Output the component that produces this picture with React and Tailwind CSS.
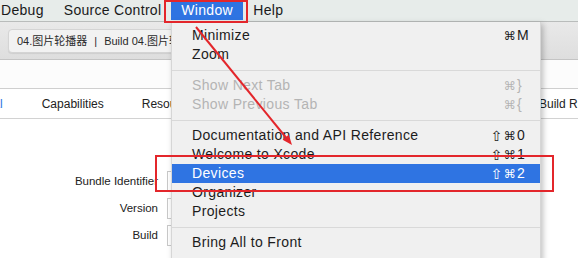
import React from "react";

const FONT = "font-['Liberation_Sans','Noto_Sans_CJK_SC',sans-serif]";

const items = [
  { t: "Minimize", m: "⌘", k: "M" },
  { t: "Zoom" },
  "sep",
  { t: "Show Next Tab", m: "⌘", k: "}", dis: true },
  { t: "Show Previous Tab", m: "⌘", k: "{", dis: true },
  "sep",
  { t: "Documentation and API Reference", s: true, k: "0" },
  { t: "Welcome to Xcode", s: true, k: "1" },
  { t: "Devices", s: true, k: "2", sel: true },
  { t: "Organizer" },
  { t: "Projects" },
  "sep",
  { t: "Bring All to Front" },
];

function MenuRow({ it }) {
  const color = it.sel
    ? "bg-[#2f74e2] text-white"
    : it.dis
    ? "text-[#b4b4b4]"
    : "text-[#1c1c1c]";
  return (
    <div className={`flex items-center h-[19px] pl-[20px] pr-[9px] text-[14px] tracking-[0.35px] ${color}`}>
      <span className="flex-1 whitespace-nowrap">{it.t}</span>
      {it.k && (
        <span className="flex items-center">
          {it.s && (
            <span className="font-['DejaVu_Sans',sans-serif] text-[14px] leading-none mr-[1px]">⇧</span>
          )}
          <span className="font-['DejaVu_Sans',sans-serif] text-[12px] mr-[1px]">⌘</span>
          <span className="w-[14px] text-left">{it.k}</span>
        </span>
      )}
    </div>
  );
}

function WindowMenu() {
  return (
    <div className="absolute left-[171px] top-[22px] w-[370px] h-[240px] bg-[#f0f0f0] border-l border-r border-[#d6d6d6] shadow-[2px_2px_6px_rgba(0,0,0,0.25)] pt-[4px]">
      {items.map((it, i) =>
        it === "sep" ? (
          <div key={i} className="h-[12px] flex items-center">
            <div className="w-full h-px bg-[#d9d9d9]" />
          </div>
        ) : (
          <MenuRow key={i} it={it} />
        )
      )}
    </div>
  );
}

function MenuBar() {
  return (
    <div className="flex h-[22px] bg-[#e7ecea] border-b border-[#b9bcbb] text-[14px] tracking-[0.3px] text-[#1a1a1a] items-stretch whitespace-nowrap">
      <div className="px-[10px] ml-[-9px] flex items-center">Debug</div>
      <div className="px-[10px] flex items-center">Source Control</div>
      <div className="w-[72px] pl-[10px] flex items-center bg-[#2f74e2] text-white my-[1px]">Window</div>
      <div className="px-[10px] flex items-center">Help</div>
    </div>
  );
}

function Toolbar() {
  return (
    <div className="h-[38px] bg-gradient-to-b from-[#e9e9e9] to-[#dedede] border-b border-[#c4c4c4] pl-[8px] pt-[7px]">
      <div className="h-[24px] w-[300px] rounded-[4px] bg-[#f2f2f2] border border-[#d4d4d4] shadow-[0_1px_1px_rgba(0,0,0,0.08)] flex items-center pl-[8px] text-[11px] text-[#2a2a2a] whitespace-nowrap">
        <span>04.图片轮播器</span>
        <span className="mx-[7px]">|</span>
        <span>Build 04.图片轮播器: Succeeded</span>
      </div>
    </div>
  );
}

function TabsRow() {
  return (
    <div className="h-[30px] border-b border-[#d2d2d2] flex items-center text-[12px] text-[#222] whitespace-nowrap overflow-hidden">
      <div className="w-[539px] shrink-0 flex items-center overflow-hidden">
        <span className="ml-[-40px] text-[#2f74e2]">General</span>
        <span className="ml-[39px]">Capabilities</span>
        <span className="ml-[38px]">Resource Tags</span>
        <span className="ml-[38px]">Info</span>
        <span className="ml-[38px]">Build Settings</span>
      </div>
      <span className="shrink-0">Build Rules</span>
    </div>
  );
}

function FieldRow({ label }) {
  return (
    <div className="flex items-center h-[21px] gap-[9px]">
      <div className="w-[158px] text-right text-[11.5px] text-[#222]">{label}</div>
      <div className="w-[300px] h-[21px] bg-white border border-[#c9c9c9]" />
    </div>
  );
}

export default function App() {
  return (
    <div className={`relative w-[578px] h-[258px] overflow-hidden bg-white ${FONT}`}>
      <MenuBar />
      <Toolbar />
      <div className="h-[29px] bg-[#fcfcfc] border-b border-[#cfcfcf]" />
      <TabsRow />
      <div className="pt-[52px] flex flex-col gap-[6px]">
        <FieldRow label="Bundle Identifier" />
        <FieldRow label="Version" />
        <FieldRow label="Build" />
      </div>
      <WindowMenu />
      <svg className="absolute left-0 top-0 pointer-events-none" width="578" height="258" viewBox="0 0 578 258">
        <rect x="165" y="1" width="82" height="21" fill="none" stroke="#e3262b" strokeWidth="2" />
        <rect x="156" y="156" width="397" height="35" fill="none" stroke="#e3262b" strokeWidth="2" />
        <line x1="196" y1="27" x2="288" y2="140" stroke="#e3262b" strokeWidth="2" />
        <polygon points="292,145 282.6,139.7 288.8,134.7" fill="#e3262b" />
      </svg>
    </div>
  );
}
